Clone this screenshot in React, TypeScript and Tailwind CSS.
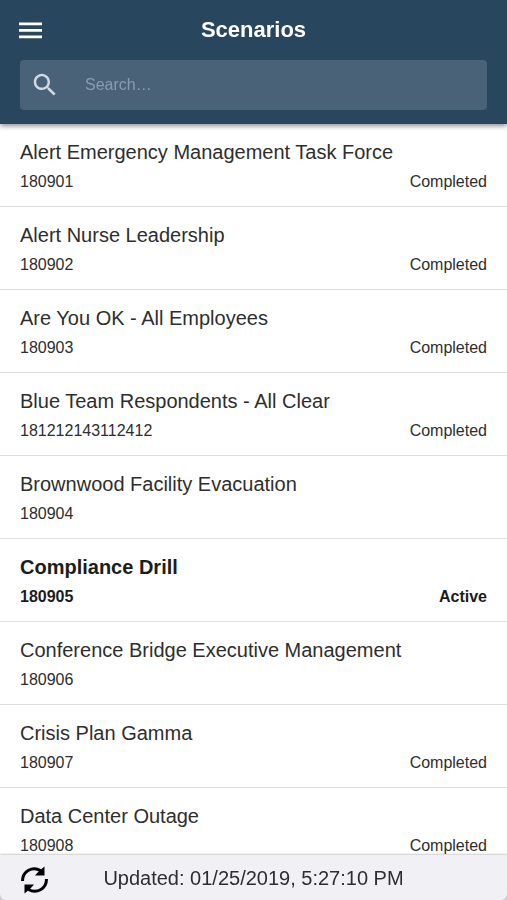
import { useState } from "react";

type Scenario = {
  id: string;
  title: string;
  status?: "Completed" | "Active";
};

const scenarios: Scenario[] = [
  { id: "180901", title: "Alert Emergency Management Task Force", status: "Completed" },
  { id: "180902", title: "Alert Nurse Leadership", status: "Completed" },
  { id: "180903", title: "Are You OK - All Employees", status: "Completed" },
  { id: "181212143112412", title: "Blue Team Respondents - All Clear", status: "Completed" },
  { id: "180904", title: "Brownwood Facility Evacuation" },
  { id: "180905", title: "Compliance Drill", status: "Active" },
  { id: "180906", title: "Conference Bridge Executive Management" },
  { id: "180907", title: "Crisis Plan Gamma", status: "Completed" },
  { id: "180908", title: "Data Center Outage", status: "Completed" },
];

function MenuIcon() {
  return (
    <svg viewBox="0 0 30 30" className="size-[30px]" fill="currentColor" aria-hidden>
      <path d="M3 7.500h23v2.700H3zM3 14h23v2.700H3zM3 20.500h23v2.700H3z" />
    </svg>
  );
}

function SearchIcon() {
  return (
    <svg viewBox="0 0 24 24" className="size-[30px] shrink-0" fill="currentColor" aria-hidden>
      <path d="M15.5 14h-.79l-.28-.27C15.41 12.59 16 11.11 16 9.5 16 5.91 13.09 3 9.5 3S3 5.91 3 9.5 5.91 16 9.5 16c1.61 0 3.09-.59 4.23-1.57l.27.28v.79l5 4.99L20.49 19l-4.99-5zm-6 0C7.01 14 5 11.99 5 9.5S7.01 5 9.5 5 14 7.01 14 9.5 11.99 14 9.5 14z" />
    </svg>
  );
}

function RefreshIcon() {
  return (
    <svg viewBox="0 0 28 28" className="size-7" aria-hidden>
      <g fill="none" stroke="currentColor" strokeWidth="3">
        <path d="M2.500 15C2.500 5 12.500 0 20.500 4.500" />
        <path d="M26.500 13C26.500 23 16.500 28 8.500 23.500" />
      </g>
      <path d="M24.500 .5v9h-9.500l4-4.500z" fill="currentColor" />
      <path d="M4.500 27.500v-9h9.500l-4 4.500z" fill="currentColor" />
    </svg>
  );
}

function ScenarioRow({ scenario }: { scenario: Scenario }) {
  const active = scenario.status === "Active";

  return (
    <li className="border-b border-[#dedede]">
      <button
        type="button"
        className={`flex w-full flex-col gap-[7px] px-5 pt-4 pb-[13px] text-left ${
          active ? "font-bold text-[#1c1c1c]" : "text-[#2e2e2e]"
        }`}
      >
        <span className="text-xl leading-6">{scenario.title}</span>
        <span className="flex w-full justify-between text-base leading-[22px]">
          <span>{scenario.id}</span>
          <span>{scenario.status}</span>
        </span>
      </button>
    </li>
  );
}

export default function App() {
  const [query, setQuery] = useState("");
  const visible = scenarios.filter((item) => item.title.toLowerCase().includes(query.toLowerCase()));

  return (
    <div className="flex h-screen flex-col bg-[#cfcfd2] font-['Liberation_Sans',Arial,sans-serif]">
      <header className="relative z-10 bg-[#29465f] px-5 pt-[15px] pb-[14px] text-white shadow-[0_2px_5px_rgba(0,0,0,0.45)]">
        <div className="grid grid-cols-[30px_1fr_30px] items-center">
          <button type="button" aria-label="Open menu" className="-ml-1">
            <MenuIcon />
          </button>
          <h1 className="text-center text-[22px] leading-[30px] font-bold">Scenarios</h1>
        </div>
        <label className="mt-[15px] flex h-[50px] items-center gap-[25px] rounded bg-[#4a6277] pl-[10px]">
          <span className="text-[#cfdae2]">
            <SearchIcon />
          </span>
          <input
            type="search"
            aria-label="Search scenarios"
            placeholder="Search…"
            value={query}
            onChange={(event) => setQuery(event.target.value)}
            className="min-w-0 flex-1 bg-transparent text-base text-white outline-none placeholder:text-[#869db0]"
          />
        </label>
      </header>
      <ul className="min-h-0 flex-1 overflow-y-auto bg-white [scrollbar-width:none]">
        {visible.map((scenario) => (
          <ScenarioRow key={scenario.id} scenario={scenario} />
        ))}
      </ul>
      <footer className="relative z-10 grid h-[45px] shrink-0 grid-cols-[28px_1fr_28px] items-center rounded-b-md bg-[#f0f0f5] px-5 text-[#2e2e2e] shadow-[0_-1px_2px_rgba(0,0,0,0.2)]">
        <button type="button" aria-label="Refresh" className="pt-1 text-black">
          <RefreshIcon />
        </button>
        <p className="text-center text-xl">Updated: 01/25/2019, 5:27:10 PM</p>
      </footer>
    </div>
  );
}
